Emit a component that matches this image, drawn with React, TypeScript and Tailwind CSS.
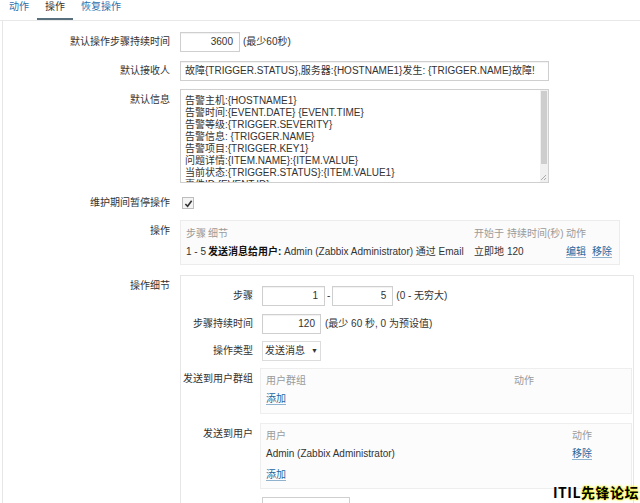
import React from "react";

const msgLines = [
  "告警主机:{HOSTNAME1}",
  "告警时间:{EVENT.DATE} {EVENT.TIME}",
  "告警等级:{TRIGGER.SEVERITY}",
  "告警信息: {TRIGGER.NAME}",
  "告警项目:{TRIGGER.KEY1}",
  "问题详情:{ITEM.NAME}:{ITEM.VALUE}",
  "当前状态:{TRIGGER.STATUS}:{ITEM.VALUE1}",
  "事件ID:{EVENT.ID}",
];

const inputCls =
  "h-[20px] border border-[#cfcfcf] bg-white shadow-[inset_0_1px_1px_rgba(0,0,0,0.06)] flex items-center";

const Link = ({ children }: { children: React.ReactNode }) => (
  <span className="text-[#23679f] underline decoration-[#8fb3cf] underline-offset-2 cursor-pointer">
    {children}
  </span>
);

const Row = ({
  label,
  children,
  className = "",
  top = false,
}: {
  label: string;
  children: React.ReactNode;
  className?: string;
  top?: boolean;
}) => (
  <div className={`flex ${top ? "items-start" : "items-center"} ${className}`}>
    <div className={`w-[167px] shrink-0 text-right ${top ? "pt-[5px]" : ""}`}>
      {label}
    </div>
    <div className="ml-[10px] flex items-center">{children}</div>
  </div>
);

const Tabs = () => (
  <div className="h-[21px] flex border-b border-[#e8e8e8]">
    <div className="px-[8px] pt-[1px] text-[#2b70ad] ml-[1px]">动作</div>
    <div className="px-[8px] pt-[1px] h-[20px] border-b-2 border-[#58707e] text-[#333]">
      操作
    </div>
    <div className="px-[8px] pt-[1px] text-[#2b70ad]">恢复操作</div>
  </div>
);

const OperationsTable = () => (
  <div className="w-[440px] h-[45px] border border-[#ececec] bg-[#fbfbfb] pl-[5px] pt-[6px]">
    <div className="flex text-[#9a9a9a] h-[14px] items-center">
      <div className="w-[22px]">步骤</div>
      <div className="w-[266px]">细节</div>
      <div className="w-[33px]">开始于</div>
      <div className="w-[59px]">持续时间(秒)</div>
      <div>动作</div>
    </div>
    <div className="flex h-[14px] items-center mt-[4px] whitespace-nowrap">
      <div className="w-[22px]">1 - 5</div>
      <div className="w-[266px]">
        <span className="font-bold text-[#111]">发送消息给用户:</span> Admin (Zabbix
        Administrator) 通过 Email
      </div>
      <div className="w-[33px]">立即地</div>
      <div className="w-[59px]">120</div>
      <div className="flex gap-[6px]">
        <Link>编辑</Link>
        <Link>移除</Link>
      </div>
    </div>
  </div>
);

const SubRow = ({
  label,
  children,
  className = "",
  top = false,
}: {
  label: string;
  children: React.ReactNode;
  className?: string;
  top?: boolean;
}) => (
  <div className={`flex ${top ? "items-start" : "items-center"} ${className}`}>
    <div className={`w-[72px] shrink-0 text-right ${top ? "pt-[5px]" : ""}`}>
      {label}
    </div>
    <div className="ml-[7px] flex items-center">{children}</div>
  </div>
);

const Details = () => (
  <div className="w-[454px] h-[240px] border border-b-0 border-[#e6e6e6] pt-[10px]">
    <SubRow label="步骤">
      <div className="ml-[2px] flex items-center">
        <div className={`${inputCls} w-[63px] justify-end pr-[6px]`}>1</div>
        <span className="mx-[2px]">-</span>
        <div className={`${inputCls} w-[61px] justify-end pr-[6px]`}>5</div>
        <span className="ml-[3px]">(0 - 无穷大)</span>
      </div>
    </SubRow>
    <SubRow label="步骤持续时间" className="mt-[8px]">
      <div className="ml-[2px] flex items-center">
        <div className={`${inputCls} w-[59px] justify-end pr-[5px]`}>120</div>
        <span className="ml-[4px]">(最少 60 秒, 0 为预设值)</span>
      </div>
    </SubRow>
    <SubRow label="操作类型" className="mt-[7px]">
      <div className="ml-[2px] h-[20px] w-[59px] border border-[#dcdcdc] bg-white flex items-center pl-[2px] gap-[6px]">
        <span>发送消息</span>
        <span className="text-[7px]">▼</span>
      </div>
    </SubRow>
    <SubRow label="发送到用户群组" className="mt-[7px]" top>
      <div className="w-[372px] h-[46px] border border-[#eeeeee] bg-[#fcfcfc] pl-[5px] pt-[5px]">
        <div className="flex text-[#9a9a9a] h-[14px] items-center">
          <div className="w-[248px]">用户群组</div>
          <div>动作</div>
        </div>
        <div className="mt-[4px] h-[14px] flex items-center">
          <Link>添加</Link>
        </div>
      </div>
    </SubRow>
    <SubRow label="发送到用户" className="mt-[9px]" top>
      <div className="w-[372px] h-[66px] border border-[#eeeeee] bg-[#fcfcfc] pl-[5px] pt-[5px]">
        <div className="flex text-[#9a9a9a] h-[14px] items-center">
          <div className="w-[306px]">用户</div>
          <div>动作</div>
        </div>
        <div className="flex mt-[4px] h-[14px] items-center">
          <div className="w-[306px]">Admin (Zabbix Administrator)</div>
          <Link>移除</Link>
        </div>
        <div className="mt-[7px] h-[14px] flex items-center">
          <Link>添加</Link>
        </div>
      </div>
    </SubRow>
    <div className="ml-[81px] mt-[8px] w-[88px] h-[20px] border border-[#cfcfcf]" />
  </div>
);

export default function App() {
  return (
    <div className="relative w-[640px] h-[503px] overflow-hidden bg-white text-[10px] leading-[12px] text-[#333] font-['Arial','Liberation_Sans','Noto_Sans_CJK_SC',sans-serif]">
      <Tabs />
      <div className="ml-[2px] border-l border-[#e6e6e6] pt-[11px] h-[482px]">
        <Row label="默认操作步骤持续时间">
          <div className={`${inputCls} w-[60px] justify-end pr-[6px]`}>3600</div>
          <span className="ml-[3px]">(最少60秒)</span>
        </Row>
        <Row label="默认接收人" className="mt-[9px]">
          <div className={`${inputCls} w-[369px] pl-[4px] whitespace-nowrap`}>
            故障{"{TRIGGER.STATUS}"},服务器:{"{HOSTNAME1}"}发生: {"{TRIGGER.NAME}"}故障!
          </div>
        </Row>
        <Row label="默认信息" className="mt-[8px]" top>
          <div className="relative w-[369px] h-[94px] border border-[#cfcfcf] bg-white overflow-hidden">
            <div className="pl-[4px] pt-[5px] pr-[12px]">
              {msgLines.map((l) => (
                <div key={l} className="h-[12px] whitespace-nowrap">
                  {l}
                </div>
              ))}
            </div>
            <div className="absolute right-0 top-0 w-[8px] h-full bg-[#f0f0f0]">
              <div className="mt-[1px] mx-[1px] h-[73px] bg-[#cdcdcd]" />
            </div>
            <svg
              className="absolute right-[1px] bottom-[1px]"
              width="7"
              height="7"
              viewBox="0 0 7 7"
            >
              <path d="M6 1L1 6M6 4L4 6" stroke="#999" strokeWidth="0.8" />
            </svg>
          </div>
        </Row>
        <Row label="维护期间暂停操作" className="mt-[14px]">
          <div className="ml-[2px] w-[12px] h-[12px] border border-[#bdbdbd] bg-[#f4f4f4] flex items-center justify-center">
            <svg width="9" height="9" viewBox="0 0 10 10">
              <path
                d="M1.5 5.5L4 8L8.5 2"
                stroke="#333"
                strokeWidth="1.8"
                fill="none"
              />
            </svg>
          </div>
        </Row>
        <Row label="操作" className="mt-[11px]" top>
          <OperationsTable />
        </Row>
        <Row label="操作细节" className="mt-[10px]" top>
          <Details />
        </Row>
      </div>
      <div className="absolute right-[1px] bottom-[3px] text-[14px] leading-[15px] font-bold text-black tracking-[0.5px] font-['Noto_Sans_CJK_SC',sans-serif]">
        ITIL
        <span className="[text-shadow:0_0_3px_#f5f000,0_0_2px_#f5f000]">先锋论坛</span>
      </div>
    </div>
  );
}
